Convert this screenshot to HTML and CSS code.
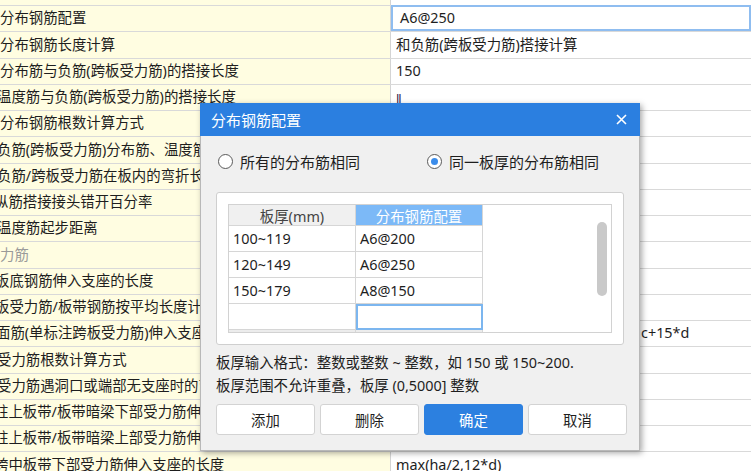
FILE: index.html
```html
<!DOCTYPE html>
<html>
<head>
<meta charset="utf-8">
<link rel="stylesheet" href="styles.css">
</head>
<body>
<div class="sheet">
  <div class="row top"><div class="l"></div><div class="r"></div></div>
  <div class="row"><div class="l">分布钢筋配置</div><div class="r focus">A6@250</div></div>
  <div class="row"><div class="l">分布钢筋长度计算</div><div class="r">和负筋(跨板受力筋)搭接计算</div></div>
  <div class="row"><div class="l">分布筋与负筋(跨板受力筋)的搭接长度</div><div class="r">150</div></div>
  <div class="row"><div class="l c3">温度筋与负筋(跨板受力筋)的搭接长度</div><div class="r"><span class="caret">ll</span></div></div>
  <div class="row"><div class="l">分布钢筋根数计算方式</div><div class="r"></div></div>
  <div class="row"><div class="l c3">负筋(跨板受力筋)分布筋、温度筋是否连通</div><div class="r"></div></div>
  <div class="row"><div class="l c3">负筋/跨板受力筋在板内的弯折长度</div><div class="r"></div></div>
  <div class="row"><div class="l c6">纵筋搭接接头错开百分率</div><div class="r"></div></div>
  <div class="row"><div class="l c3">温度筋起步距离</div><div class="r"></div></div>
  <div class="row"><div class="l cat">力筋</div><div class="r"></div></div>
  <div class="row"><div class="l c5">板底钢筋伸入支座的长度</div><div class="r"></div></div>
  <div class="row"><div class="l c5">板受力筋/板带钢筋按平均长度计算</div><div class="r"></div></div>
  <div class="row"><div class="l c4">面筋(单标注跨板受力筋)伸入支座的长度</div><div class="r"><span class="tail">c+15*d</span></div></div>
  <div class="row"><div class="l c3">受力筋根数计算方式</div><div class="r"></div></div>
  <div class="row"><div class="l c3">受力筋遇洞口或端部无支座时的弯折长度</div><div class="r"></div></div>
  <div class="row"><div class="l c6">柱上板带/板带暗梁下部受力筋伸入支座的长度</div><div class="r"></div></div>
  <div class="row"><div class="l c6">柱上板带/板带暗梁上部受力筋伸入支座的长度</div><div class="r"></div></div>
  <div class="row"><div class="l c6">跨中板带下部受力筋伸入支座的长度</div><div class="r">max(ha/2,12*d)</div></div>
</div>

<div class="dialog">
  <div class="title">
    <span>分布钢筋配置</span>
    <svg class="close" width="11" height="11" viewBox="0 0 11 11"><path d="M1 1L10 10M10 1L1 10" stroke="#fff" stroke-width="1.6" fill="none"/></svg>
  </div>
  <div class="body">
    <div class="radios">
      <label class="radio r1"><span class="dot"></span>所有的分布筋相同</label>
      <label class="radio r2"><span class="dot on"></span>同一板厚的分布筋相同</label>
    </div>
    <div class="group">
      <div class="grid">
        <div class="cols">
          <div class="gcol">
            <div class="hd">板厚(mm)</div>
            <div class="cell">100~119</div>
            <div class="cell">120~149</div>
            <div class="cell">150~179</div>
            <div class="cell"></div>
          </div>
          <div class="gcol">
            <div class="hd sel">分布钢筋配置</div>
            <div class="cell">A6@200</div>
            <div class="cell">A6@250</div>
            <div class="cell">A8@150</div>
            <div class="cell edit"></div>
          </div>
          <div class="blank"><div class="thumb"></div></div>
        </div>
      </div>
    </div>
    <div class="note">
      <div>板厚输入格式：整数或整数 ~ 整数，如 150 或 150~200.</div>
      <div>板厚范围不允许重叠，板厚 (0,5000] 整数</div>
    </div>
    <div class="buttons">
      <div class="btn">添加</div>
      <div class="btn">删除</div>
      <div class="btn primary">确定</div>
      <div class="btn">取消</div>
    </div>
  </div>
</div>
</body>
</html>
```

FILE: styles.css
```css
html, body {
  margin: 0;
  padding: 0;
  width: 751px;
  height: 471px;
  overflow: hidden;
  background: #fff;
  font-family: "Noto Sans", "Noto Sans CJK SC", sans-serif;
  font-size: 14.4px;
  color: #1e1e1e;
}

.sheet {
  display: flex;
  flex-direction: column;
}

.row {
  display: flex;
  height: 26.25px;
  box-sizing: border-box;
  border-top: 1px solid #d9d9d9;
  flex-shrink: 0;
}

.row.top {
  height: 5px;
  border-top: none;
}

.l {
  width: 390px;
  flex-shrink: 0;
  background: #fffde1;
  border-right: 1px solid #d4d4d4;
  white-space: nowrap;
  overflow: hidden;
  display: flex;
  align-items: center;
  line-height: 1;
}

.l.c3 { text-indent: -3px; }
.l.c4 { text-indent: -4px; }
.l.c5 { text-indent: -5px; }
.l.c6 { text-indent: -6px; }
.l.cat { color: #9a9a9a; }

.r {
  flex: 1;
  display: flex;
  align-items: center;
  padding-left: 5px;
  white-space: nowrap;
  overflow: hidden;
  line-height: 1;
}

.r.focus {
  border: 2px solid #8fbdf0;
  margin-top: -1px;
  padding-left: 7px;
  box-sizing: border-box;
}

.caret {
  color: #3a2a55;
  letter-spacing: -1px;
  font-size: 13px;
  padding-top: 4px;
}

.tail {
  padding-left: 245px;
}

/* dialog */
.dialog {
  position: absolute;
  left: 200px;
  top: 103px;
  width: 440px;
  height: 348px;
  background: #f0f0f0;
  box-sizing: border-box;
  border: 1px solid #b8b8b8;
  border-top: none;
  box-shadow: 2px 2px 6px rgba(0, 0, 0, 0.35);
  display: flex;
  flex-direction: column;
}

.title {
  height: 33px;
  background: #2b7fe0;
  color: #fff;
  font-size: 15px;
  display: flex;
  align-items: center;
  justify-content: space-between;
  padding: 0 13px 0 11px;
  margin: 0 -1px;
  flex-shrink: 0;
}

.close {
  display: block;
}

.body {
  padding: 15px 12px 0 15px;
  display: flex;
  flex-direction: column;
}

.radios {
  display: flex;
  height: 20px;
  align-items: center;
  font-size: 15px;
}

.radio {
  display: flex;
  align-items: center;
  gap: 7px;
  white-space: nowrap;
}

.r1 { width: 209px; padding-left: 2px; }

.dot {
  width: 13px;
  height: 13px;
  border: 1px solid #5a5a5a;
  border-radius: 50%;
  background: #fff;
  position: relative;
  flex-shrink: 0;
}

.dot.on::after {
  content: "";
  position: absolute;
  left: 3px;
  top: 3px;
  width: 7px;
  height: 7px;
  border-radius: 50%;
  background: #3b8cea;
}

.group {
  margin-top: 21px;
  width: 408px;
  height: 153px;
  box-sizing: border-box;
  background: #fff;
  border: 1px solid #cfcfcf;
  border-radius: 3px;
  padding: 11px;
}

.grid {
  width: 384px;
  height: 129px;
  box-sizing: border-box;
  border: 1px solid #d2d2d2;
  background: #ececec;
}

.cols {
  display: flex;
  height: 100%;
}

.gcol {
  width: 126px;
  display: flex;
  flex-direction: column;
  border-right: 1px solid #d6d6d6;
}

.hd {
  height: 20px;
  background: #f0f0f0;
  color: #444;
  display: flex;
  align-items: center;
  justify-content: center;
  border-bottom: 1px solid #d6d6d6;
  font-size: 14.4px;
}

.hd.sel {
  background: #7cb9f7;
  color: #fff;
}

.cell {
  height: 26px;
  box-sizing: border-box;
  background: #fff;
  border-bottom: 1px solid #d6d6d6;
  display: flex;
  align-items: center;
  padding-left: 4px;
}

.cell.edit {
  border: 2px solid #7cb6ef;
  margin: 0 -1px 0 0;
}

.blank {
  flex: 1;
  background: #fff;
  position: relative;
}

.thumb {
  position: absolute;
  right: 4px;
  top: 17px;
  width: 10px;
  height: 74px;
  background: #c9c9c9;
  border-radius: 5px;
}

.note {
  margin-top: 6px;
  line-height: 23px;
  font-size: 14.4px;
  color: #1e1e1e;
  white-space: nowrap;
}

.buttons {
  margin-top: 7px;
  display: flex;
  gap: 5px;
}

.btn {
  width: 99px;
  height: 31px;
  box-sizing: border-box;
  background: #fff;
  border: 1px solid #d3d3d3;
  border-radius: 3px;
  display: flex;
  align-items: center;
  justify-content: center;
  font-size: 14.4px;
}

.btn.primary {
  background: #2c80e0;
  border-color: #2c80e0;
  color: #fff;
}
```
